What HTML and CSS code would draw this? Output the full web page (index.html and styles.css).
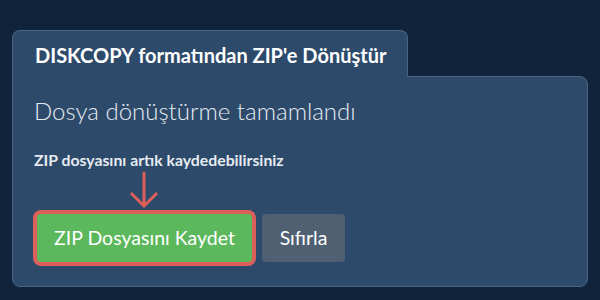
FILE: index.html
```html
<!doctype html>
<html lang="tr">
<head>
	<meta charset="utf-8" />
	<title>DISKCOPY formatından ZIP'e Dönüştür</title>
	<link rel="stylesheet" href="styles.css">
</head>
<body>

	<!-- BEGIN: Converter. -->
	<section class="converter">
		<div class="converter__tab">
			DISKCOPY formatından ZIP'e Dönüştür
		</div>
		<div class="converter__panel">

			<h2 class="converter__title">
				Dosya dönüştürme tamamlandı
			</h2>

			<p class="converter__note">
				ZIP dosyasını artık kaydedebilirsiniz
			</p>

			<div class="converter__hint">
				<svg class="converter__arrow" width="30" height="36" viewBox="0 0 30 36">
					<path d="M15 0 L15 34 M2 21 L15 34 L28 21" fill="none" stroke="#dc5f5a" stroke-width="3" />
				</svg>
			</div>

			<div class="converter__actions">
				<button class="button button--save">ZIP Dosyasını Kaydet</button>
				<button class="button button--reset">Sıfırla</button>
			</div>

		</div>
	</section>
	<!-- END: Converter. -->

</body>
</html>
```

FILE: styles.css
```css
html {
	box-sizing: border-box ;
}

*, *:before, *:after {
	box-sizing: inherit ;
}

body {
	background-color: #11233a ;
	color: #ffffff ;
	font-family: Lato, "Noto Sans", sans-serif ;
	margin: 0px 0px 0px 0px ;
	padding: 30px 12px 0px 12px ;
}

/* BEGIN: Converter. */
.converter {
	display: flex ;
	flex-direction: column ;
	align-items: flex-start ;
}

.converter__tab {
	background-color: #2d4a6b ;
	border: 1px solid #4a6584 ;
	border-bottom: none ;
	border-radius: 8px 8px 0px 0px ;
	font-size: 20px ;
	font-weight: 700 ;
	height: 47px ;
	line-height: 24px ;
	margin-bottom: -1px ;
	padding: 12px 21px 0px 22px ;
	position: relative ;
	z-index: 1 ;
}

.converter__panel {
	align-self: stretch ;
	background-color: #2d4a6b ;
	border: 1px solid #4a6584 ;
	border-radius: 0px 8px 8px 8px ;
	height: 211px ;
	padding: 19px 21px 0px 21px ;
}

.converter__title {
	color: #e6ebf0 ;
	font-size: 24px ;
	font-weight: 300 ;
	line-height: 29px ;
	margin: 0px 0px 0px 0px ;
}

.converter__note {
	color: #e6ebf0 ;
	font-size: 15.8px ;
	font-weight: 700 ;
	line-height: 19px ;
	margin: 25px 0px 0px 0px ;
}

.converter__hint {
	display: flex ;
	height: 45px ;
	padding: 3px 0px 0px 95px ;
}

.converter__actions {
	display: flex ;
	gap: 10px ;
	padding-left: 3px ;
}
/* END: Converter. */

.button {
	border: none ;
	border-radius: 4px ;
	color: #ffffff ;
	font-family: Lato, "Noto Sans", sans-serif ;
	font-size: 19.5px ;
	font-weight: 400 ;
	height: 48px ;
	line-height: 24px ;
	padding: 0px 0px 0px 0px ;
}

.button--save {
	background-color: #5cb85c ;
	box-shadow: 0px 0px 0px 4px #dc5f5a ;
	width: 215px ;
}

.button--reset {
	background-color: #4f6072 ;
	width: 83px ;
}
```
